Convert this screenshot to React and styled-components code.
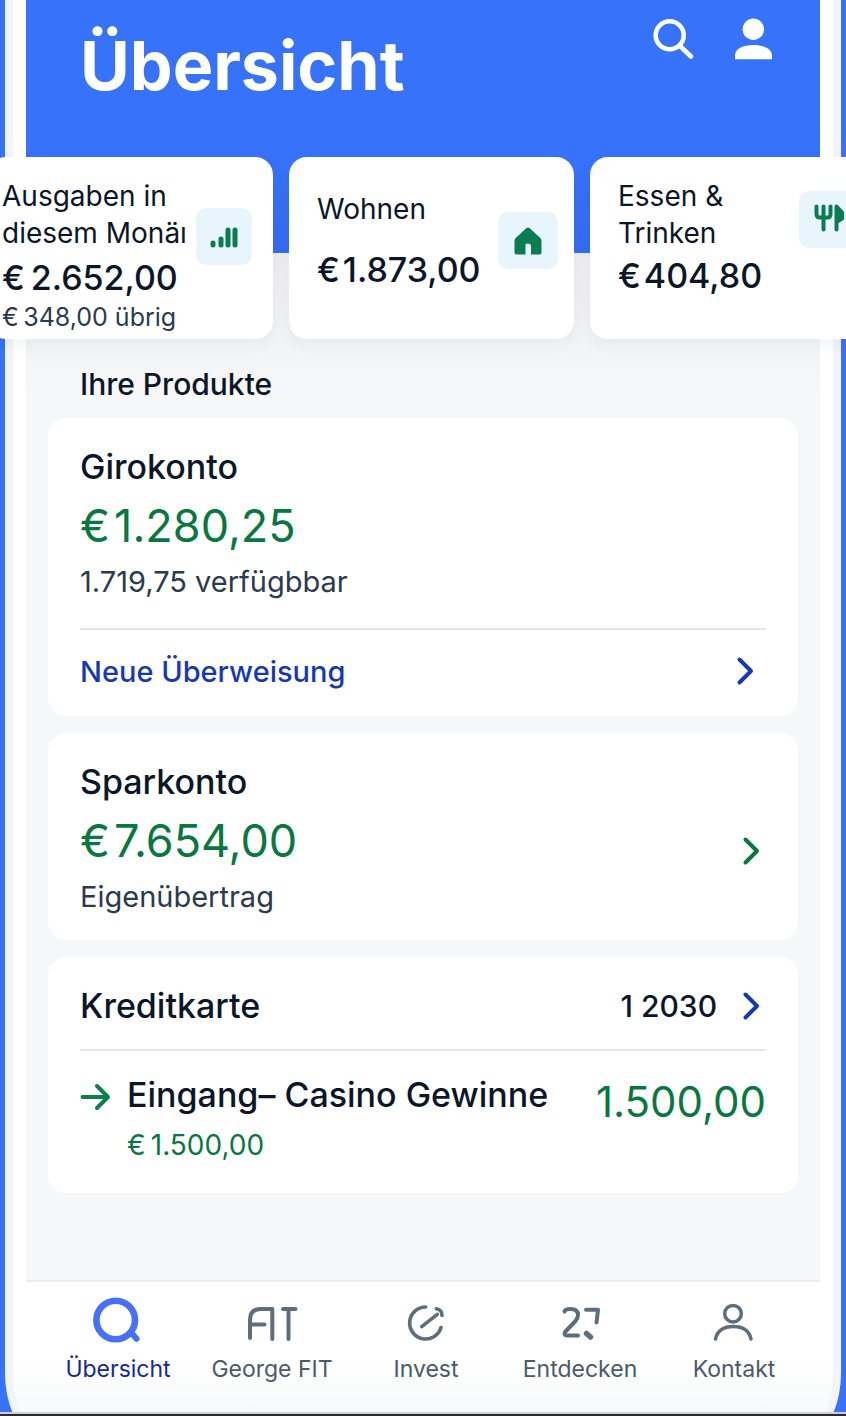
import React from "react";
import styled, { createGlobalStyle } from "styled-components";

const c = {
  blue: "#3673fa",
  ink: "#0b1629",
  slate: "#2b3a4e",
  muted: "#4b5a6b",
  icon: "#5f6e7d",
  green: "#07783f",
  tileGreen: "#0a7d50",
  link: "#1738b4",
  line: "#e4e6e9",
  page: "#f6f7f9",
  tile: "#e9f5fc",
};

const Global = createGlobalStyle`
  *, *::before, *::after { box-sizing: border-box; }
  body { margin: 0; background: ${c.blue}; color: ${c.ink}; font-family: Inter, "Liberation Sans", sans-serif; }
  h1, h2, h3, p, ul { margin: 0; padding: 0; font-weight: inherit; }
  button { border: 0; padding: 0; background: none; font: inherit; color: inherit; cursor: pointer; }
  a { color: inherit; text-decoration: none; }
  svg { display: block; flex: none; overflow: visible; }
`;

const Shell = styled.div`
  min-height: 100vh;
  display: flex;
  flex-direction: column;
  overflow: hidden;
  background: ${c.blue};
`;

const Phone = styled.div`
  flex: 1;
  display: flex;
  flex-direction: column;
  margin: 0 5px -64px;
  padding-bottom: 64px;
  border: solid #f3f4f6;
  border-width: 0 8px;
  border-radius: 0 0 104px 104px;
  background: linear-gradient(#fff, #fff calc(100% - 120px), #f8f9fa calc(100% - 64px));
`;

const Screen = styled.div`
  flex: 1;
  display: flex;
  flex-direction: column;
  margin: 0 13px;
`;

const BottomEdge = styled.div`
  height: 5px;
  position: relative;
  margin-top: -2px;
  border-top: 2px solid #cfd0d2;
  background: #2a2b2e;
`;

const Header = styled.header`
  display: flex;
  justify-content: space-between;
  align-items: flex-start;
  height: 253px;
  padding: 17px 45px 0 54px;
  color: #fff;
  background: linear-gradient(${c.blue} 60%, #346df0);
`;

const Title = styled.h1`
  font-size: 68px;
  line-height: 96px;
  font-weight: 700;
`;

const HeaderActions = styled.div`
  display: flex;
  gap: 36px;
`;

const Main = styled.main`
  flex: 1;
  padding: 0 22px 87px;
  background: linear-gradient(#ededef, ${c.page} 140px);
`;

const Carousel = styled.section`
  display: flex;
  gap: 16px;
  margin: -96px -48px 0 -60px;
`;

const SpendCard = styled.article`
  flex: none;
  display: flex;
  gap: 6px;
  width: 285px;
  height: 182px;
  padding: ${(p) => p.$pad};
  border-radius: 18px;
  background: #fff;
  box-shadow: 0 6px 16px rgba(20, 30, 50, 0.05);
`;

const SpendText = styled.div`
  flex: none;
  width: ${(p) => p.$width};
  white-space: nowrap;
`;

const SpendLabel = styled.h2`
  font-size: 28px;
  line-height: 37px;
`;

const SpendAmount = styled.p`
  padding-top: ${(p) => (p.$spaced ? "16px" : "0")};
  font-size: 34px;
  line-height: ${(p) => (p.$loose ? "52px" : "48px")};
  font-weight: 500;
`;

const SpendNote = styled.p`
  font-size: 25px;
  line-height: 26px;
  color: ${c.slate};
`;

const Tile = styled.div`
  flex: none;
  display: grid;
  place-items: center;
  width: ${(p) => p.$width || "56px"};
  height: 57px;
  margin-top: ${(p) => p.$top};
  border-radius: 10px;
  background: ${c.tile};
  color: ${c.tileGreen};
`;

const SectionTitle = styled.h2`
  padding: 24px 32px 13px;
  font-size: 30px;
  line-height: 42px;
  font-weight: 500;
`;

const Products = styled.div`
  display: grid;
  gap: 17px;
`;

const Card = styled.section`
  padding: 0 32px;
  border-radius: 18px;
  background: #fff;
`;

const Account = styled.div`
  display: flex;
  align-items: center;
  justify-content: space-between;
  padding: 28px 6px ${(p) => p.$bottom} 0;
`;

const AccountLink = styled.a`
  padding-top: 26px;
`;

const CardTitle = styled.h3`
  font-size: 34px;
  line-height: 42px;
  font-weight: 500;
`;

const Balance = styled.p`
  font-size: 45px;
  line-height: 76px;
  color: ${c.green};
`;

const Detail = styled.p`
  font-size: 29px;
  line-height: 36px;
  color: ${c.slate};
`;

const ActionRow = styled.a`
  display: flex;
  align-items: center;
  justify-content: space-between;
  height: 88px;
  padding: 0 12px 4px 0;
  border-top: 2px solid ${c.line};
  font-size: 29px;
  font-weight: 500;
  color: ${c.link};
`;

const CardHead = styled.div`
  display: flex;
  align-items: center;
  justify-content: space-between;
  height: 94px;
  padding: 6px 6px 0 0;
  border-bottom: 2px solid ${c.line};
`;

const CardNumber = styled.a`
  display: flex;
  align-items: center;
  gap: 26px;
  font-size: 30px;
  font-weight: 500;
`;

const Entry = styled.div`
  display: flex;
  align-items: flex-start;
  padding: 23px 0 27px;
`;

const EntryText = styled.div`
  flex: 1;
  padding-left: 16px;
`;

const EntryNote = styled.p`
  padding-top: 8px;
  font-size: 28px;
  line-height: 42px;
  color: ${c.green};
`;

const EntryAmount = styled.p`
  font-size: 42px;
  line-height: 56px;
  color: ${c.green};
`;

const ArrowBox = styled.div`
  padding-top: 9px;
`;

const TabBar = styled.nav`
  display: grid;
  grid-template-columns: repeat(5, 1fr);
  height: 134px;
  padding: 15px 9px 0 15px;
  border-top: 2px solid #ebecee;
`;

const Tab = styled.a`
  display: flex;
  flex-direction: column;
  align-items: center;
  gap: 9px;
  font-size: 23px;
  line-height: 30px;
  white-space: nowrap;
  color: ${(p) => (p.$active ? "#14299a" : c.muted)};
`;

const stroke = { fill: "none", stroke: "currentColor", strokeLinecap: "round", strokeLinejoin: "round" };

const Chevron = ({ color }) => (
  <svg width="17" height="28" viewBox="0 0 17 28" {...stroke} stroke={color} strokeWidth="4">
    <path d="M2.500 2.500 14 14 2.500 25.500" />
  </svg>
);

const SearchIcon = () => (
  <svg width="44" height="44" viewBox="0 0 44 44" {...stroke} strokeWidth="4.600">
    <circle cx="18.700" cy="18.300" r="14" />
    <path d="M29 29 40 39.500" />
  </svg>
);

const UserIcon = () => (
  <svg width="44" height="44" viewBox="0 0 44 44" fill="currentColor">
    <circle cx="22.300" cy="12.300" r="10.700" />
    <path d="M4 42.300V39C4 31.500 12 28 22.300 28S41 31.500 41 39V42.300Z" />
  </svg>
);

const BarsIcon = () => (
  <svg width="28" height="24" viewBox="0 0 28 24" {...stroke} strokeWidth="5">
    <path d="M3 18V20M11 14V20M18 5V20M25 5V20" />
  </svg>
);

const HomeIcon = () => (
  <svg width="28" height="28" viewBox="0 0 28 28" fill="currentColor">
    <path d="M12.500 1.100Q14 0 15.500 1.100L26.300 11Q27.500 12.200 27.500 14V25.500Q27.500 27.500 25.500 27.500H17V19Q17 16.500 14 16.500T11.500 19V27.500H2.500Q.5 27.500 .5 25.500V14Q.5 12.200 1.700 11Z" />
  </svg>
);

const FoodIcon = () => (
  <svg width="31" height="32" viewBox="0 0 31 32" {...stroke} strokeWidth="4">
    <path d="M2.500 2.500V10Q2.500 13.500 6 13.500H13.500Q16.500 13.500 16.500 10V2.500M9.500 2.500V25.500" />
    <path d="M22.500 2.500V25.500M22.500 2.500 28 8.500V14.500L22.500 18Z" fill="currentColor" strokeWidth="4" />
  </svg>
);

const ArrowIcon = () => (
  <svg width="31" height="28" viewBox="0 0 31 28" {...stroke} stroke="#0c8049" strokeWidth="4">
    <path d="M2.500 14H28M17 3 28 14 17 25" />
  </svg>
);

const tabIcons = {
  overview: (
    <g stroke="#4670fa">
      <circle cx="25.700" cy="23" r="19.300" strokeWidth="6.600" />
      <path d="M41.500 36 46.500 41.700" strokeWidth="6" />
    </g>
  ),
  fit: <path d="M6 41V23Q6 12 17 12H28.300V42M6 27.500H20.500M39 12H51.500M44.500 12V42" />,
  invest: <path d="M27.700 10A16 16 0 1 0 43 30.500M23.700 29.700 39.300 17.300M38.300 11.700Q44 12.500 44 18.500" strokeWidth="3.600" />,
  discover: (
    <g>
      <path d="M12.500 14.500Q13 12 18.500 12 26 12 26 18 26 21 23.500 24L13 35Q11.500 38.500 15 38.500H26" />
      <path d="M34 12.700H46L44.500 25.500" />
      <path d="M34.500 36.500 38.500 40" strokeWidth="5.500" />
    </g>
  ),
  contact: (
    <g strokeWidth="3.500">
      <circle cx="27" cy="16.700" r="8.300" />
      <path d="M9.500 42C11.500 33 18 29.500 27.300 29.500S43 33 45 42" />
    </g>
  ),
};

const tabs = [
  ["overview", "Übersicht"],
  ["fit", "George FIT"],
  ["invest", "Invest"],
  ["discover", "Entdecken"],
  ["contact", "Kontakt"],
];

export default function App() {
  return (
    <Shell>
      <Global />
      <Phone>
        <Screen>
          <Header>
            <Title>Übersicht</Title>
            <HeaderActions>
              <button aria-label="Suche"><SearchIcon /></button>
              <button aria-label="Profil"><UserIcon /></button>
            </HeaderActions>
          </Header>
          <Main>
            <Carousel>
              <SpendCard $pad="21px 0 0 14px">
                <SpendText $width="188px">
                  <SpendLabel>Ausgaben in<br />diesem Monäı</SpendLabel>
                  <SpendAmount $loose>€{"\u2009"}2.652,00</SpendAmount>
                  <SpendNote>€{"\u2009"}348,00 übrig</SpendNote>
                </SpendText>
                <Tile $top="30px"><BarsIcon /></Tile>
              </SpendCard>
              <SpendCard $pad="34px 0 0 28px">
                <SpendText $width="175px">
                  <SpendLabel>Wohnen</SpendLabel>
                  <SpendAmount $spaced $loose>€{"\u200A"}1.873,00</SpendAmount>
                </SpendText>
                <Tile $top="21px" $width="60px"><HomeIcon /></Tile>
              </SpendCard>
              <SpendCard $pad="21px 0 0 28px">
                <SpendText $width="175px">
                  <SpendLabel>Essen &amp;<br />Trinken</SpendLabel>
                  <SpendAmount>€{"\u200A"}404,80</SpendAmount>
                </SpendText>
                <Tile $top="13px" $width="60px"><FoodIcon /></Tile>
              </SpendCard>
            </Carousel>

            <SectionTitle>Ihre Produkte</SectionTitle>
            <Products>
              <Card>
                <Account $bottom="28px">
                  <div>
                    <CardTitle>Girokonto</CardTitle>
                    <Balance>€{"\u200A"}1.280,25</Balance>
                    <Detail>1.719,75 verfügbbar</Detail>
                  </div>
                </Account>
                <ActionRow href="#ueberweisung">
                  Neue Überweisung
                  <Chevron color={c.link} />
                </ActionRow>
              </Card>
              <Card>
                <Account $bottom="25px">
                  <div>
                    <CardTitle>Sparkonto</CardTitle>
                    <Balance>€{"\u200A"}7.654,00</Balance>
                    <Detail>Eigenübertrag</Detail>
                  </div>
                  <AccountLink href="#sparkonto" aria-label="Sparkonto öffnen">
                    <Chevron color={c.green} />
                  </AccountLink>
                </Account>
              </Card>
              <Card>
                <CardHead>
                  <CardTitle>Kreditkarte</CardTitle>
                  <CardNumber href="#kreditkarte">
                    1 2030
                    <Chevron color={c.link} />
                  </CardNumber>
                </CardHead>
                <Entry>
                  <ArrowBox><ArrowIcon /></ArrowBox>
                  <EntryText>
                    <CardTitle>Eingang– Casino Gewinne</CardTitle>
                    <EntryNote>€{"\u2009"}1.500,00</EntryNote>
                  </EntryText>
                  <EntryAmount>1.500,00</EntryAmount>
                </Entry>
              </Card>
            </Products>
          </Main>
          <TabBar aria-label="Hauptnavigation">
            {tabs.map(([id, label]) => (
              <Tab key={id} href={`#${id}`} $active={id === "overview"}>
                <svg width="56" height="48" viewBox="0 0 56 48" {...stroke} stroke={c.icon} strokeWidth="4">
                  {tabIcons[id]}
                </svg>
                {label}
              </Tab>
            ))}
          </TabBar>
        </Screen>
      </Phone>
      <BottomEdge />
    </Shell>
  );
}
